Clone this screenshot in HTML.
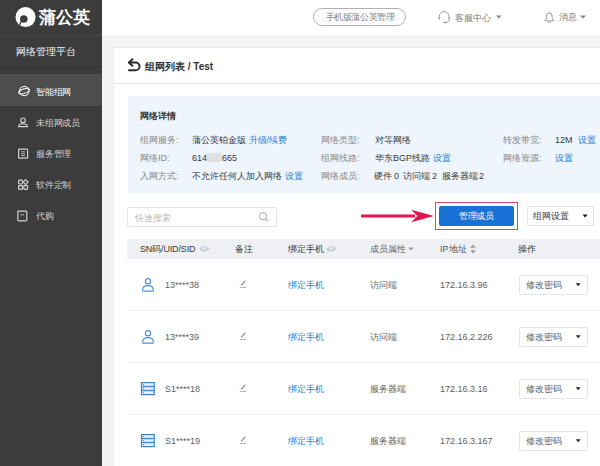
<!DOCTYPE html>
<html><head><meta charset="utf-8">
<style>
*{margin:0;padding:0;box-sizing:border-box}
html,body{width:600px;height:466px;overflow:hidden;background:#f4f4f4;font-family:"Liberation Sans",sans-serif;position:relative}
.a{position:absolute;white-space:nowrap;line-height:1}
.f9{font-size:9px}
.g{color:#888}
.d{color:#3a3a3a}
.m{color:#5e5e5e}
.b{color:#2782d7}
.sd{color:#d0d0d0;font-size:8.8px;font-weight:500;letter-spacing:-0.2px}
svg.a{overflow:visible}
</style></head><body>
<!-- sidebar -->
<div class="a" style="left:0;top:0;width:102px;height:466px;background:#3c3c3c"></div>
<div class="a" style="left:0;top:35px;width:102px;height:1px;background:#474747"></div>
<div class="a" style="left:0;top:67px;width:102px;height:1px;background:#353535"></div>
<div class="a" style="left:0;top:74px;width:102px;height:32px;background:#4d4d4d"></div>
<svg class="a" style="left:15px;top:7px" width="22" height="21" viewBox="0 0 22 21">
  <circle cx="10.55" cy="10.05" r="10.05" fill="#fff"/>
  <circle cx="8.8" cy="11.95" r="3.8" fill="#3c3c3c"/>
  <path d="M6.2,14.2 L3.9,19.6" stroke="#3c3c3c" stroke-width="1.4"/>
</svg>
<div class="a" style="left:39px;top:9px;font-size:17px;font-weight:bold;color:#fff">蒲公英</div>
<div class="a" style="left:16px;top:47px;font-size:10px;color:#f2f2f2;font-weight:500">网络管理平台</div>
<div class="a" style="left:36px;top:88px;color:#fff;font-size:8.8px;font-weight:500;letter-spacing:-0.2px">智能组网</div>
<div class="a sd" style="left:36px;top:119px">未组网成员</div>
<div class="a sd" style="left:36px;top:150px">服务管理</div>
<div class="a sd" style="left:36px;top:181px">软件定制</div>
<div class="a sd" style="left:36px;top:212px">代购</div>

<!-- header -->
<div class="a" style="left:102px;top:0;width:498px;height:35px;background:#fff"></div>
<div class="a" style="left:313px;top:7.5px;width:93px;height:18.5px;border:1px solid #b0b0b0;border-radius:9.5px"></div>
<div class="a" style="left:325.5px;top:13px;color:#808080;font-size:8.6px;letter-spacing:-0.4px">手机版蒲公英管理</div>
<div class="a f9" style="left:455px;top:13.5px;color:#7a7a7a">客服中心</div>
<div class="a" style="left:559px;top:13px;color:#7a7a7a;font-size:8.6px;letter-spacing:-0.5px">消息</div>

<!-- card -->
<div class="a" style="left:113px;top:47px;width:487px;height:419px;background:#fff;border-left:1px solid #e9e9e9;border-top:1px solid #e9e9e9"></div>
<div class="a" style="left:114px;top:83px;width:486px;height:1px;background:#e8e8e8"></div>
<div class="a" style="left:145px;top:62px;font-size:10px;font-weight:bold;color:#333">组网列表 / Test</div>

<!-- info panel -->
<div class="a" style="left:128px;top:96px;width:472px;height:97px;background:#eef5fc"></div>
<div class="a" style="left:140px;top:111.5px;font-size:9px;font-weight:bold;color:#333">网络详情</div>
<div class="a f9 g" style="left:140px;top:136px">组网服务:</div>
<div class="a f9 g" style="left:140px;top:154px">网络ID:</div>
<div class="a f9 g" style="left:140px;top:171.5px">入网方式:</div>
<div class="a f9 d" style="left:192px;top:136px">蒲公英铂金版 <span class="b">升级/续费</span></div>
<div class="a f9 d" style="left:192px;top:154px">614</div>
<div class="a" style="left:207px;top:153px;width:15px;height:9px;background:#dee0e3"></div>
<div class="a f9 d" style="left:222px;top:154px">665</div>
<div class="a f9 d" style="left:192px;top:171.5px">不允许任何人加入网络 <span class="b">设置</span></div>

<div class="a f9 g" style="left:321px;top:136px">网络类型:</div>
<div class="a f9 g" style="left:321px;top:154px">组网线路:</div>
<div class="a f9 g" style="left:321px;top:171.5px">网络成员:</div>
<div class="a f9 d" style="left:375px;top:136px">对等网络</div>
<div class="a f9 d" style="left:375px;top:154px">华东BGP线路 <span class="b">设置</span></div>
<div class="a f9 d" style="left:374px;top:171.5px">硬件</div><div class="a f9 d" style="left:394px;top:171.5px">0</div><div class="a f9 d" style="left:403px;top:171.5px">访问端</div><div class="a f9 d" style="left:432px;top:171.5px">2</div><div class="a f9 d" style="left:442px;top:171.5px">服务器端</div><div class="a f9 d" style="left:479px;top:171.5px">2</div>

<div class="a f9 g" style="left:503px;top:136px">转发带宽:</div>
<div class="a f9 g" style="left:503px;top:154px">网络资源:</div>
<div class="a f9 d" style="left:555px;top:136px">12M</div><div class="a f9 b" style="left:578px;top:136px">设置</div>
<div class="a f9 b" style="left:555px;top:154px">设置</div>

<!-- toolbar -->
<div class="a" style="left:127px;top:207px;width:150px;height:20px;border:1px solid #e3e3e3;border-radius:2px;background:#fff"></div>
<div class="a f9" style="left:135px;top:214px;color:#bbb">快速搜索</div>
<div class="a" style="left:435px;top:202px;width:83px;height:28px;border:1.5px solid #e2456f"></div>
<div class="a" style="left:439px;top:206px;width:75px;height:20px;background:#1872d3;border-radius:2px"></div>
<div class="a" style="left:459px;top:212px;color:#fff;font-size:8.6px;font-weight:500;letter-spacing:-0.4px">管理成员</div>
<div class="a" style="left:527px;top:206px;width:67px;height:20px;border:1px solid #e3e3e3;border-radius:2px;background:#fff"></div>
<div class="a f9 d" style="left:533px;top:212px">组网设置</div>

<!-- table header -->
<div class="a" style="left:127px;top:239px;width:473px;height:20px;background:#eef0f4"></div>
<div class="a f9 d" style="left:140px;top:245px;letter-spacing:-0.15px">SN码/UID/SID</div>
<div class="a f9 d" style="left:235px;top:245px">备注</div>
<div class="a f9 d" style="left:288px;top:245px">绑定手机</div>
<div class="a f9" style="left:370px;top:245px;color:#666">成员属性</div>
<div class="a f9" style="left:440px;top:245px;color:#555">IP地址</div>
<div class="a f9 d" style="left:518px;top:245px">操作</div>

<!-- rows -->
<div class="a" style="left:127px;top:310px;width:473px;height:1px;background:#ebebeb"></div>
<div class="a" style="left:127px;top:362px;width:473px;height:1px;background:#ebebeb"></div>
<div class="a" style="left:127px;top:414px;width:473px;height:1px;background:#ebebeb"></div>

<div class="a f9 m" style="left:165px;top:280.5px">13****38</div>
<div class="a f9 m" style="left:165px;top:332.5px">13****39</div>
<div class="a f9 m" style="left:165px;top:384.5px">S1****18</div>
<div class="a f9 m" style="left:165px;top:436.5px">S1****19</div>

<div class="a f9 b" style="left:288px;top:280.5px">绑定手机</div>
<div class="a f9 b" style="left:288px;top:332.5px">绑定手机</div>
<div class="a f9 b" style="left:288px;top:384.5px">绑定手机</div>
<div class="a f9 b" style="left:288px;top:436.5px">绑定手机</div>

<div class="a f9 m" style="left:370px;top:280.5px">访问端</div>
<div class="a f9 m" style="left:370px;top:332.5px">访问端</div>
<div class="a f9 m" style="left:370px;top:384.5px">服务器端</div>
<div class="a f9 m" style="left:370px;top:436.5px">服务器端</div>

<div class="a f9 m" style="left:440px;top:280.5px">172.16.3.96</div>
<div class="a f9 m" style="left:440px;top:332.5px">172.16.2.226</div>
<div class="a f9 m" style="left:440px;top:384.5px">172.16.3.16</div>
<div class="a f9 m" style="left:440px;top:436.5px">172.16.3.167</div>

<div class="a" style="left:519px;top:275px;width:69px;height:20px;border:1px solid #e3e3e3;border-radius:2px"></div>
<div class="a" style="left:519px;top:327px;width:69px;height:20px;border:1px solid #e3e3e3;border-radius:2px"></div>
<div class="a" style="left:519px;top:379px;width:69px;height:20px;border:1px solid #e3e3e3;border-radius:2px"></div>
<div class="a" style="left:519px;top:431px;width:69px;height:20px;border:1px solid #e3e3e3;border-radius:2px"></div>
<div class="a f9 m" style="left:526px;top:280.5px">修改密码</div>
<div class="a f9 m" style="left:526px;top:332.5px">修改密码</div>
<div class="a f9 m" style="left:526px;top:384.5px">修改密码</div>
<div class="a f9 m" style="left:526px;top:436.5px">修改密码</div>


<!-- ICONS -->
<svg class="a" style="left:0;top:0" width="600" height="466" viewBox="0 0 600 466">
  <!-- sidebar icons -->
  <g fill="none" stroke="#e8e8e8" stroke-width="1.2">
    <circle cx="24.3" cy="91" r="4.7"/>
    <ellipse cx="24" cy="91.2" rx="5.6" ry="2.2" transform="rotate(-18 24 91.2)"/>
  </g>
  <g fill="none" stroke="#cfcfcf" stroke-width="1.2">
    <circle cx="23" cy="120.3" r="2.3"/>
    <path d="M18.6,126.6 C18.6,122.8 27.4,122.8 27.4,126.6 Z"/>
    <rect x="18.6" y="149.2" width="9" height="9" rx="0.8"/>
    <path d="M21,151.8 H25 M21,153.7 H25 M21,155.6 H25" stroke-width="0.8"/>
    <rect x="18.6" y="180.2" width="3.8" height="3.8" rx="0.8"/>
    <rect x="18.6" y="185.6" width="3.8" height="3.8" rx="0.8"/>
    <rect x="23.8" y="185.6" width="3.8" height="3.8" rx="0.8"/>
    <path d="M25.7,179.6 L28.1,182.1 L25.7,184.6 L23.3,182.1 Z"/>
    <rect x="17.8" y="211.2" width="9" height="9.6" rx="0.8"/>
    <path d="M20.5,213.8 L22.3,215.6 L24.1,213.8" stroke-width="1"/>
  </g>
  <!-- header icons -->
  <g fill="none" stroke="#999" stroke-width="1">
    <path d="M439.2,18.6 V16.8 A5,5.2 0 0 1 449.2,16.8 V18.6" stroke="#a0a0a0"/>
    <rect x="438.4" y="16.8" width="1.6" height="3" rx="0.7" fill="#a8a8a8" stroke="none"/>
    <rect x="448.4" y="16.8" width="1.6" height="3" rx="0.7" fill="#a8a8a8" stroke="none"/>
    <path d="M449.2,19.6 C449.2,21.6 447.6,22.5 445,22.5" stroke="#999"/>
    <ellipse cx="444.6" cy="22.5" rx="1.2" ry="0.8" fill="#888" stroke="none"/>
    <path d="M544.4,20.8 H554.2 M544.9,20.6 C546.3,19.6 546.5,18.4 546.5,16.2 A2.8,3.2 0 0 1 552.1,16.2 C552.1,18.4 552.3,19.6 553.7,20.6 M549.3,11.8 V13 M548.1,21.6 A1.2,1.1 0 0 0 550.5,21.6" stroke="#9a9a9a"/>
  </g>
  <path d="M496,15.5 H501.5 L498.75,18.8 Z" fill="#888"/>
  <path d="M580.2,15.5 H586 L583.1,18.8 Z" fill="#888"/>
  <!-- back icon -->
  <g fill="none" stroke="#2b2b2b" stroke-width="2" stroke-linecap="round" stroke-linejoin="round">
    <path d="M129,62.5 H135.6 A3.9,3.9 0 0 1 135.6,70.3 H129"/>
    <path d="M132.4,59.3 L129,62.5 L132.4,65.7"/>
  </g>
  <!-- search icon -->
  <g fill="none" stroke="#aaa" stroke-width="1">
    <circle cx="263" cy="216.2" r="3.6"/>
    <path d="M265.6,218.8 L268.2,221.4" stroke-width="1.2"/>
  </g>
  <!-- red arrow -->
  <path d="M361,214.5 H415 V217.5 H361 Z" fill="#e3144d"/>
  <path d="M411,209.8 L434,216 L411,222.2 L417.5,216 Z" fill="#e3144d"/>
  <!-- dropdown caret -->
  <path d="M582.6,214.6 H587.6 L585.1,217.6 Z" fill="#111"/>
  <!-- eye icons -->
  <g fill="#c9d0dc">
    <path d="M199,249.2 C202,245.3 206.5,245.3 209.5,248.8 C206.5,252.7 202,252.7 199,249.2 Z"/>
    <path d="M326,249.2 C329,245.3 333.5,245.3 336.5,248.8 C333.5,252.7 329,252.7 326,249.2 Z"/>
  </g>
  <g fill="#eef0f4"><circle cx="204.3" cy="248.5" r="1.3"/><circle cx="331.3" cy="248.5" r="1.3"/></g>
  <!-- sort icons -->
  <path d="M408.2,247.6 H413.8 L411,250.6 Z" fill="#999"/>
  <path d="M470.2,247.8 H475.8 L473,244.6 Z M470.2,250.2 H475.8 L473,253.4 Z" fill="#999"/>
  <!-- row icons: person -->
  <g fill="none" stroke="#4f93d8" stroke-width="1.2">
    <circle cx="148" cy="281.2" r="2.6"/>
    <path d="M143.6,291.2 H152.4 Q153.4,291.2 153.4,290.2 C153.4,286.6 150.8,285.6 148,285.6 C145.2,285.6 142.6,286.6 142.6,290.2 Q142.6,291.2 143.6,291.2 Z"/>
    <circle cx="148" cy="333.2" r="2.6"/>
    <path d="M143.6,343.2 H152.4 Q153.4,343.2 153.4,342.2 C153.4,338.6 150.8,337.6 148,337.6 C145.2,337.6 142.6,338.6 142.6,342.2 Q142.6,343.2 143.6,343.2 Z"/>
  </g>
  <!-- server icons -->
  <rect x="141.5" y="382.6" width="12.7" height="12" fill="#e6f3fd" stroke="#3a80cb" stroke-width="1.2"/>
  <path d="M141.5,386.6 H154.2 M141.5,390.6 H154.2" stroke="#4b8fd6" stroke-width="1.5"/>
  <g fill="#3a80cb"><circle cx="143.6" cy="384.4" r="0.6"/><circle cx="143.6" cy="388.6" r="0.6"/><circle cx="143.6" cy="392.6" r="0.6"/></g>
  <rect x="141.5" y="434.6" width="12.7" height="12" fill="#e6f3fd" stroke="#3a80cb" stroke-width="1.2"/>
  <path d="M141.5,438.6 H154.2 M141.5,442.6 H154.2" stroke="#4b8fd6" stroke-width="1.5"/>
  <g fill="#3a80cb"><circle cx="143.6" cy="436.4" r="0.6"/><circle cx="143.6" cy="440.6" r="0.6"/><circle cx="143.6" cy="444.6" r="0.6"/></g>
<!-- edit icons -->
  <g fill="none">
    <path d="M239.7,287.5 H246.1" stroke="#aaa" stroke-width="0.9"/>
    <path d="M241.4,285.2 L245,281.2" stroke="#8a8a8a" stroke-width="1.2" stroke-linecap="round"/>
    <path d="M239.7,339.5 H246.1" stroke="#aaa" stroke-width="0.9"/>
    <path d="M241.4,337.2 L245,333.2" stroke="#8a8a8a" stroke-width="1.2" stroke-linecap="round"/>
    <path d="M239.7,391.5 H246.1" stroke="#aaa" stroke-width="0.9"/>
    <path d="M241.4,389.2 L245,385.2" stroke="#8a8a8a" stroke-width="1.2" stroke-linecap="round"/>
    <path d="M239.7,443.5 H246.1" stroke="#aaa" stroke-width="0.9"/>
    <path d="M241.4,441.2 L245,437.2" stroke="#8a8a8a" stroke-width="1.2" stroke-linecap="round"/>
  </g>
  <!-- row carets -->
  <g fill="#222">
    <path d="M575.8,283.3 H580.6 L578.2,286.2 Z"/>
    <path d="M575.8,335.3 H580.6 L578.2,338.2 Z"/>
    <path d="M575.8,387.3 H580.6 L578.2,390.2 Z"/>
    <path d="M575.8,439.3 H580.6 L578.2,442.2 Z"/>
  </g>
</svg>
</body></html>
